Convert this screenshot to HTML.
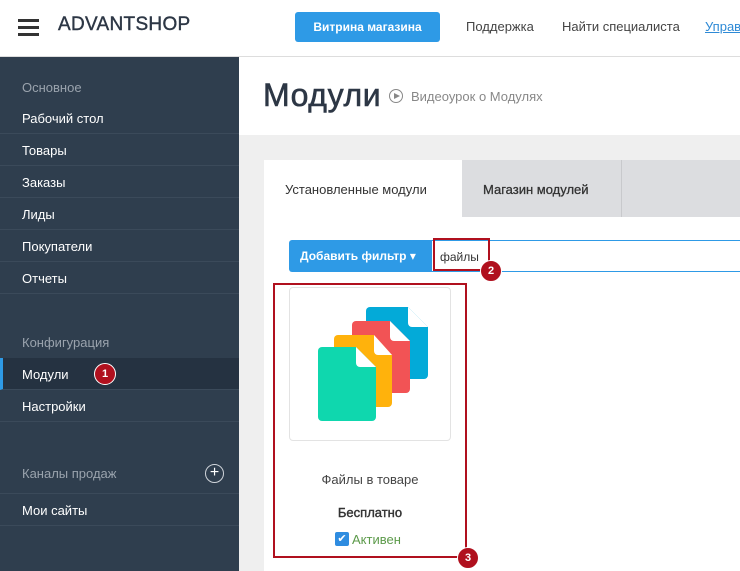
<!DOCTYPE html><html><head><meta charset="utf-8"><style>
*{margin:0;padding:0;box-sizing:border-box}
body{width:740px;height:571px;overflow:hidden;font-family:"Liberation Sans","DejaVu Sans",sans-serif;background:#efefef;position:relative}
.a{position:absolute}
.hdr{left:0;top:0;width:740px;height:57px;background:#fff;border-bottom:1px solid #ddd}
.side{left:0;top:57px;width:239px;height:514px;background:#2f3e4e}
.si{position:absolute;left:0;width:239px;height:32px;line-height:34px;padding-left:22px;color:#fff;font-size:13px;border-bottom:1px solid #3b4a5a}
.sh{position:absolute;left:22px;color:#9aa3ad;font-size:13px}
.badge{position:absolute;width:22px;height:22px;border-radius:50%;background:#b0101e;color:#fff;font-size:11px;font-weight:bold;text-align:center;line-height:20px;border:1px solid #fff}
</style></head><body>
<div class="a hdr"></div>
<div class="a" style="left:18px;top:19px;width:21px;height:3px;background:#333;box-shadow:0 7px 0 #333,0 14px 0 #333"></div>
<div class="a" style="left:58px;top:14px;font-size:19px;color:#2d3745;letter-spacing:.3px;-webkit-text-stroke:.4px #2d3745">ADVANTSHOP</div>
<div class="a" style="left:295px;top:12px;width:145px;height:30px;background:#2e9ae6;border-radius:3px;color:#fff;font-size:12px;font-weight:bold;text-align:center;line-height:30px">Витрина магазина</div>
<div class="a" style="left:466px;top:19px;font-size:13px;color:#444">Поддержка</div>
<div class="a" style="left:562px;top:19px;font-size:13px;color:#444">Найти специалиста</div>
<div class="a" style="left:705px;top:19px;font-size:13px;color:#2e8ad6;text-decoration:underline">Управ</div>
<div class="a side">
<div class="sh" style="top:23px">Основное</div>
<div class="si" style="top:45px">Рабочий стол</div>
<div class="si" style="top:77px">Товары</div>
<div class="si" style="top:109px">Заказы</div>
<div class="si" style="top:141px">Лиды</div>
<div class="si" style="top:173px">Покупатели</div>
<div class="si" style="top:205px">Отчеты</div>
<div class="sh" style="top:278px">Конфигурация</div>
<div class="si" style="top:301px;background:#253241;border-left:3px solid #2e9ae6;padding-left:19px">Модули</div>
<div class="badge" style="left:94px;top:306px">1</div>
<div class="si" style="top:333px">Настройки</div>
<div class="sh" style="top:409px">Каналы продаж</div>
<div class="a" style="left:205px;top:407px;width:19px;height:19px;border:1.5px solid #cfd4da;border-radius:50%;color:#fff;text-align:center;line-height:15px;font-size:16px">+</div>
<div class="si" style="top:436px;border-top:1px solid #3b4a5a;height:33px">Мои сайты</div>
</div>
<div class="a" style="left:239px;top:57px;width:501px;height:78px;background:#fff"></div>
<div class="a" style="left:263px;top:77px;font-size:32px;color:#2d3745;letter-spacing:.6px;-webkit-text-stroke:.6px #2d3745">Модули</div>
<div class="a" style="left:389px;top:89px;width:14px;height:14px;border:1.5px solid #888;border-radius:50%"></div>
<div class="a" style="left:394px;top:92.5px;width:0;height:0;border-left:6px solid #888;border-top:3.5px solid transparent;border-bottom:3.5px solid transparent"></div>
<div class="a" style="left:411px;top:89px;font-size:13px;color:#888">Видеоурок о Модулях</div>
<div class="a" style="left:264px;top:160px;width:476px;height:411px;background:#fff"></div>
<div class="a" style="left:462px;top:160px;width:278px;height:57px;background:#dcdde0"></div>
<div class="a" style="left:621px;top:160px;width:1px;height:57px;background:#c8c9cc"></div>
<div class="a" style="left:285px;top:182px;font-size:13px;color:#333">Установленные модули</div>
<div class="a" style="left:483px;top:182px;font-size:13px;color:#333;-webkit-text-stroke:.3px #333">Магазин модулей</div>
<div class="a" style="left:289px;top:240px;width:142px;height:32px;background:#2e9ae6;border-radius:3px 0 0 3px;color:#fff;font-size:12px;font-weight:bold;line-height:32px;padding-left:11px">Добавить фильтр ▾</div>
<div class="a" style="left:431px;top:240px;width:309px;height:32px;border:1px solid #2e9ae6;border-right:0"></div>
<div class="a" style="left:440px;top:250px;font-size:12px;color:#333">файлы</div>
<div class="a" style="left:433px;top:238px;width:57px;height:33px;border:2px solid #b0101e"></div>
<div class="badge" style="left:480px;top:260px">2</div>
<div class="a" style="left:289px;top:287px;width:162px;height:154px;border:1px solid #e3e3e3;border-radius:4px"></div>
<svg class="a" style="left:310px;top:300px" width="120" height="130" viewBox="0 0 120 130">
<g transform="translate(56,7)"><path d="M4 0H42L62 20V68a4 4 0 0 1-4 4H4a4 4 0 0 1-4-4V4a4 4 0 0 1 4-4z" fill="#03aad8"/><path d="M42 0L62 20H46a4 4 0 0 1-4-4z" fill="#fff"/></g>
<g transform="translate(42,21)"><path d="M4 0H38L58 20V68a4 4 0 0 1-4 4H4a4 4 0 0 1-4-4V4a4 4 0 0 1 4-4z" fill="#f25355"/><path d="M38 0L58 20H42a4 4 0 0 1-4-4z" fill="#fff"/></g>
<g transform="translate(24,35)"><path d="M4 0H40L58 20V68a4 4 0 0 1-4 4H4a4 4 0 0 1-4-4V4a4 4 0 0 1 4-4z" fill="#ffb20c"/><path d="M40 0L58 20H44a4 4 0 0 1-4-4z" fill="#fff"/></g>
<g transform="translate(8,47)"><path d="M4 0H38L58 20V70a4 4 0 0 1-4 4H4a4 4 0 0 1-4-4V4a4 4 0 0 1 4-4z" fill="#0fd7ae"/><path d="M38 0L58 20H42a4 4 0 0 1-4-4z" fill="#fff"/></g>
</svg>
<div class="a" style="left:289px;top:472px;width:162px;text-align:center;font-size:13px;color:#444">Файлы в товаре</div>
<div class="a" style="left:289px;top:505px;width:162px;text-align:center;font-size:13px;color:#333;-webkit-text-stroke:.4px #333">Бесплатно</div>
<div class="a" style="left:335px;top:532px;width:14px;height:14px;background:#2e8ce0;border-radius:2px;color:#fff;font-size:11px;text-align:center;line-height:14px">✔</div>
<div class="a" style="left:352px;top:532px;font-size:13px;color:#5c9a4a">Активен</div>
<div class="a" style="left:273px;top:283px;width:194px;height:275px;border:2px solid #b0101e"></div>
<div class="badge" style="left:457px;top:547px">3</div>
</body></html>
